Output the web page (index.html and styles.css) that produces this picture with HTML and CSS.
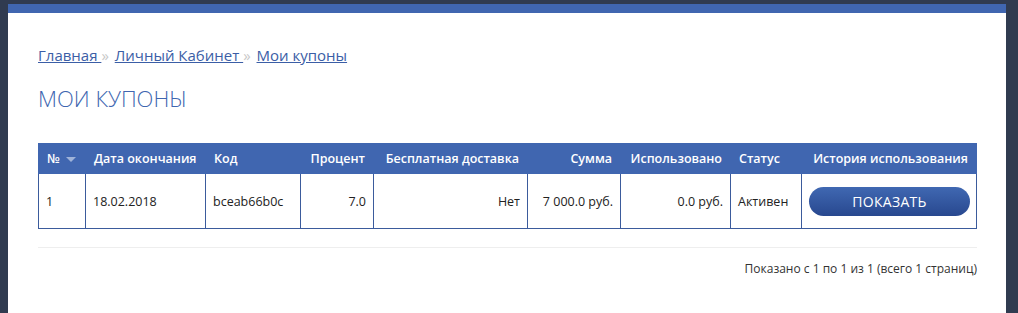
FILE: index.html
```html
<!DOCTYPE html>
<html lang="ru">
    <head>
        <meta charset="UTF-8">
        <title>Мои купоны</title>
        <link rel="stylesheet" href="styles.css">
    </head>
    <body>
        <div class="page">
            <div class="top-bar"></div>
            <div class="content">
                <div class="breadcrumb">
                    <a href="#">Главная </a><span class="sep">»</span>
                    <a href="#">Личный Кабинет </a><span class="sep">»</span>
                    <a href="#">Мои купоны</a>
                </div>
                <h1>МОИ КУПОНЫ</h1>

                <table class="coupons">
                    <colgroup>
                        <col style="width: 47px">
                        <col style="width: 120px">
                        <col style="width: 95px">
                        <col style="width: 73px">
                        <col style="width: 154px">
                        <col style="width: 93px">
                        <col style="width: 110px">
                        <col style="width: 71px">
                        <col>
                    </colgroup>
                    <thead>
                        <tr>
                            <th class="left">№ <span class="sort"></span></th>
                            <th class="left">Дата окончания</th>
                            <th class="left">Код</th>
                            <th class="right">Процент</th>
                            <th class="right">Бесплатная доставка</th>
                            <th class="right">Сумма</th>
                            <th class="right">Использовано</th>
                            <th class="left">Статус</th>
                            <th class="right">История использования</th>
                        </tr>
                    </thead>
                    <tbody>
                        <tr>
                            <td class="left">1</td>
                            <td class="left">18.02.2018</td>
                            <td class="left">bceab66b0c</td>
                            <td class="right">7.0</td>
                            <td class="right">Нет</td>
                            <td class="right">7 000.0 руб.</td>
                            <td class="right">0.0 руб.</td>
                            <td class="left">Активен</td>
                            <td class="center"><button class="btn-show">ПОКАЗАТЬ</button></td>
                        </tr>
                    </tbody>
                </table>

                <div class="pager">Показано с 1 по 1 из 1 (всего 1 страниц)</div>
            </div>
        </div>
    </body>
</html>
```

FILE: styles.css
```css
body {
    margin: 0;
    padding: 4px 12px 0 8px;
    background-color: #303b50;
    font-family: "Open Sans", Arial, sans-serif;
    color: #222;
    height: 309px;
    overflow: hidden;
}

.page {
    background-color: white;
    height: 100%;
}

.top-bar {
    height: 9px;
    background-color: #4066b0;
}

.content {
    padding: 32px 30px 0 30px;
}

.breadcrumb {
    font-size: 15px;
    line-height: 20px;
}

.breadcrumb a {
    color: #3b5ea6;
    text-decoration: underline;
}

.breadcrumb .sep {
    color: #c8c8c8;
    margin: 0 2px 0 0;
}

h1 {
    font-size: 22px;
    font-weight: 300;
    color: #4066b0;
    margin: 18px 0 30px 0;
    line-height: 30px;
}

.coupons {
    width: 939px;
    border-collapse: collapse;
    table-layout: fixed;
    font-size: 12.5px;
}

.coupons th {
    background-color: #4066b0;
    color: white;
    font-weight: 600;
    height: 29px;
    padding: 0 8px;
    border: 1px solid #4066b0;
    white-space: nowrap;
}

.coupons td {
    height: 54px;
    padding: 0 7px;
    border: 1px solid #3b5b9c;
    white-space: nowrap;
}

.left { text-align: left; }
.right { text-align: right; }
.center { text-align: center; }

.sort {
    display: inline-block;
    width: 0;
    height: 0;
    border-left: 5px solid transparent;
    border-right: 5px solid transparent;
    border-top: 5px solid #9fb3d9;
    vertical-align: middle;
    margin-left: 3px;
}

.btn-show {
    width: 161px;
    height: 29px;
    border: none;
    border-radius: 15px;
    background: linear-gradient(to bottom, #4068b2, #28488f);
    color: white;
    font-family: "Open Sans", Arial, sans-serif;
    font-size: 14px;
    letter-spacing: 0.3px;
    cursor: pointer;
}

.pager {
    width: 939px;
    border-top: 1px solid #eeeeee;
    margin-top: 18px;
    padding-top: 12px;
    text-align: right;
    font-size: 12px;
    color: #333;
}
```
